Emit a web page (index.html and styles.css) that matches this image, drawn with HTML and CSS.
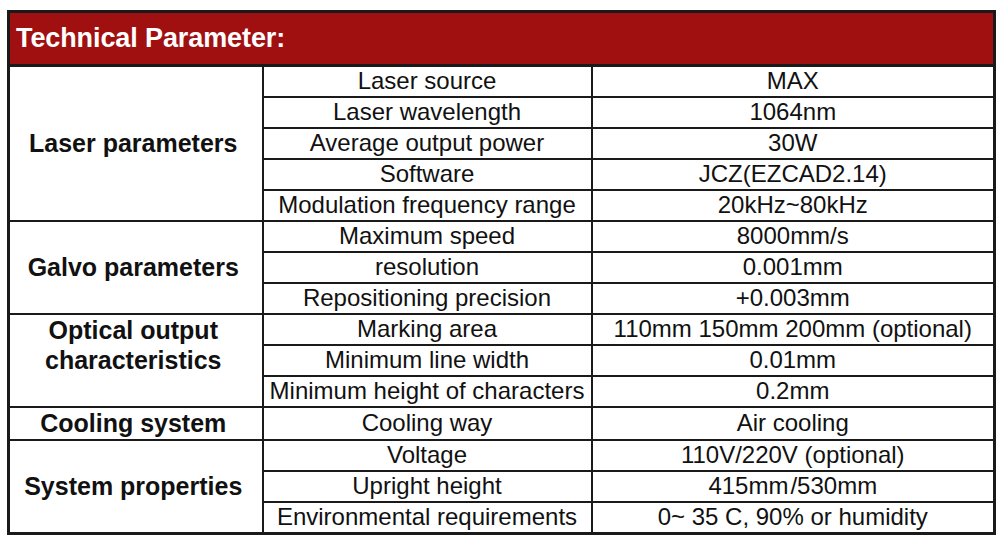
FILE: index.html
```html
<!DOCTYPE html>
<html>
<head>
<meta charset="utf-8">
<link rel="stylesheet" href="styles.css">
</head>
<body>
<table class="spec">
  <colgroup>
    <col class="c1"><col class="c2"><col class="c3">
  </colgroup>
  <tr class="head"><th colspan="3">Technical Parameter:</th></tr>
  <tr><td class="grp" rowspan="5">Laser parameters</td><td>Laser source</td><td>MAX</td></tr>
  <tr><td>Laser wavelength</td><td>1064nm</td></tr>
  <tr><td>Average output power</td><td>30W</td></tr>
  <tr><td>Software</td><td>JCZ(EZCAD2.14)</td></tr>
  <tr><td>Modulation frequency range</td><td>20kHz~80kHz</td></tr>
  <tr><td class="grp" rowspan="3">Galvo parameters</td><td>Maximum speed</td><td>8000mm/s</td></tr>
  <tr><td>resolution</td><td>0.001mm</td></tr>
  <tr><td>Repositioning precision</td><td>+0.003mm</td></tr>
  <tr><td class="grp grp-top" rowspan="3">Optical output<br>characteristics</td><td>Marking area</td><td>110mm 150mm 200mm (optional)</td></tr>
  <tr><td>Minimum line width</td><td>0.01mm</td></tr>
  <tr><td>Minimum height of characters</td><td>0.2mm</td></tr>
  <tr><td class="grp">Cooling system</td><td>Cooling way</td><td>Air cooling</td></tr>
  <tr><td class="grp" rowspan="3">System properties</td><td>Voltage</td><td>110V/220V (optional)</td></tr>
  <tr><td>Upright height</td><td>415mm&#8202;/530mm</td></tr>
  <tr><td>Environmental requirements</td><td>0~ 35 C, 90% or humidity</td></tr>
</table>
</body>
</html>
```
FILE: styles.css
```css
html, body {
  margin: 0;
  padding: 0;
  background: #ffffff;
}
body {
  padding: 10px 0 0 7px;
  font-family: "Liberation Sans", Arial, sans-serif;
  color: #111111;
}
.spec {
  border-collapse: collapse;
  width: 986px;
  table-layout: fixed;
  border: 3px solid #1a1a1a;
}
.c1 { width: 254px; }
.c2 { width: 329px; }
.c3 { width: 403px; }
.head th {
  height: 50px;
  padding: 0 0 1px 6px;
  background: #a11010;
  color: #ffffff;
  font-size: 27px;
  font-weight: bold;
  text-align: left;
  border: 3px solid #1a1a1a;
  letter-spacing: -0.1px;
}
.spec td {
  height: 28px;
  padding: 0 0 1px 0;
  border: 2px solid #1a1a1a;
  text-align: center;
  vertical-align: middle;
  font-size: 24px;
  line-height: 26px;
  white-space: nowrap;
}
.spec td.grp {
  font-weight: bold;
  font-size: 25px;
  line-height: 30px;
  padding-right: 5px;
}
.spec td.grp-top {
  vertical-align: top;
  padding-top: 0;
}
```
